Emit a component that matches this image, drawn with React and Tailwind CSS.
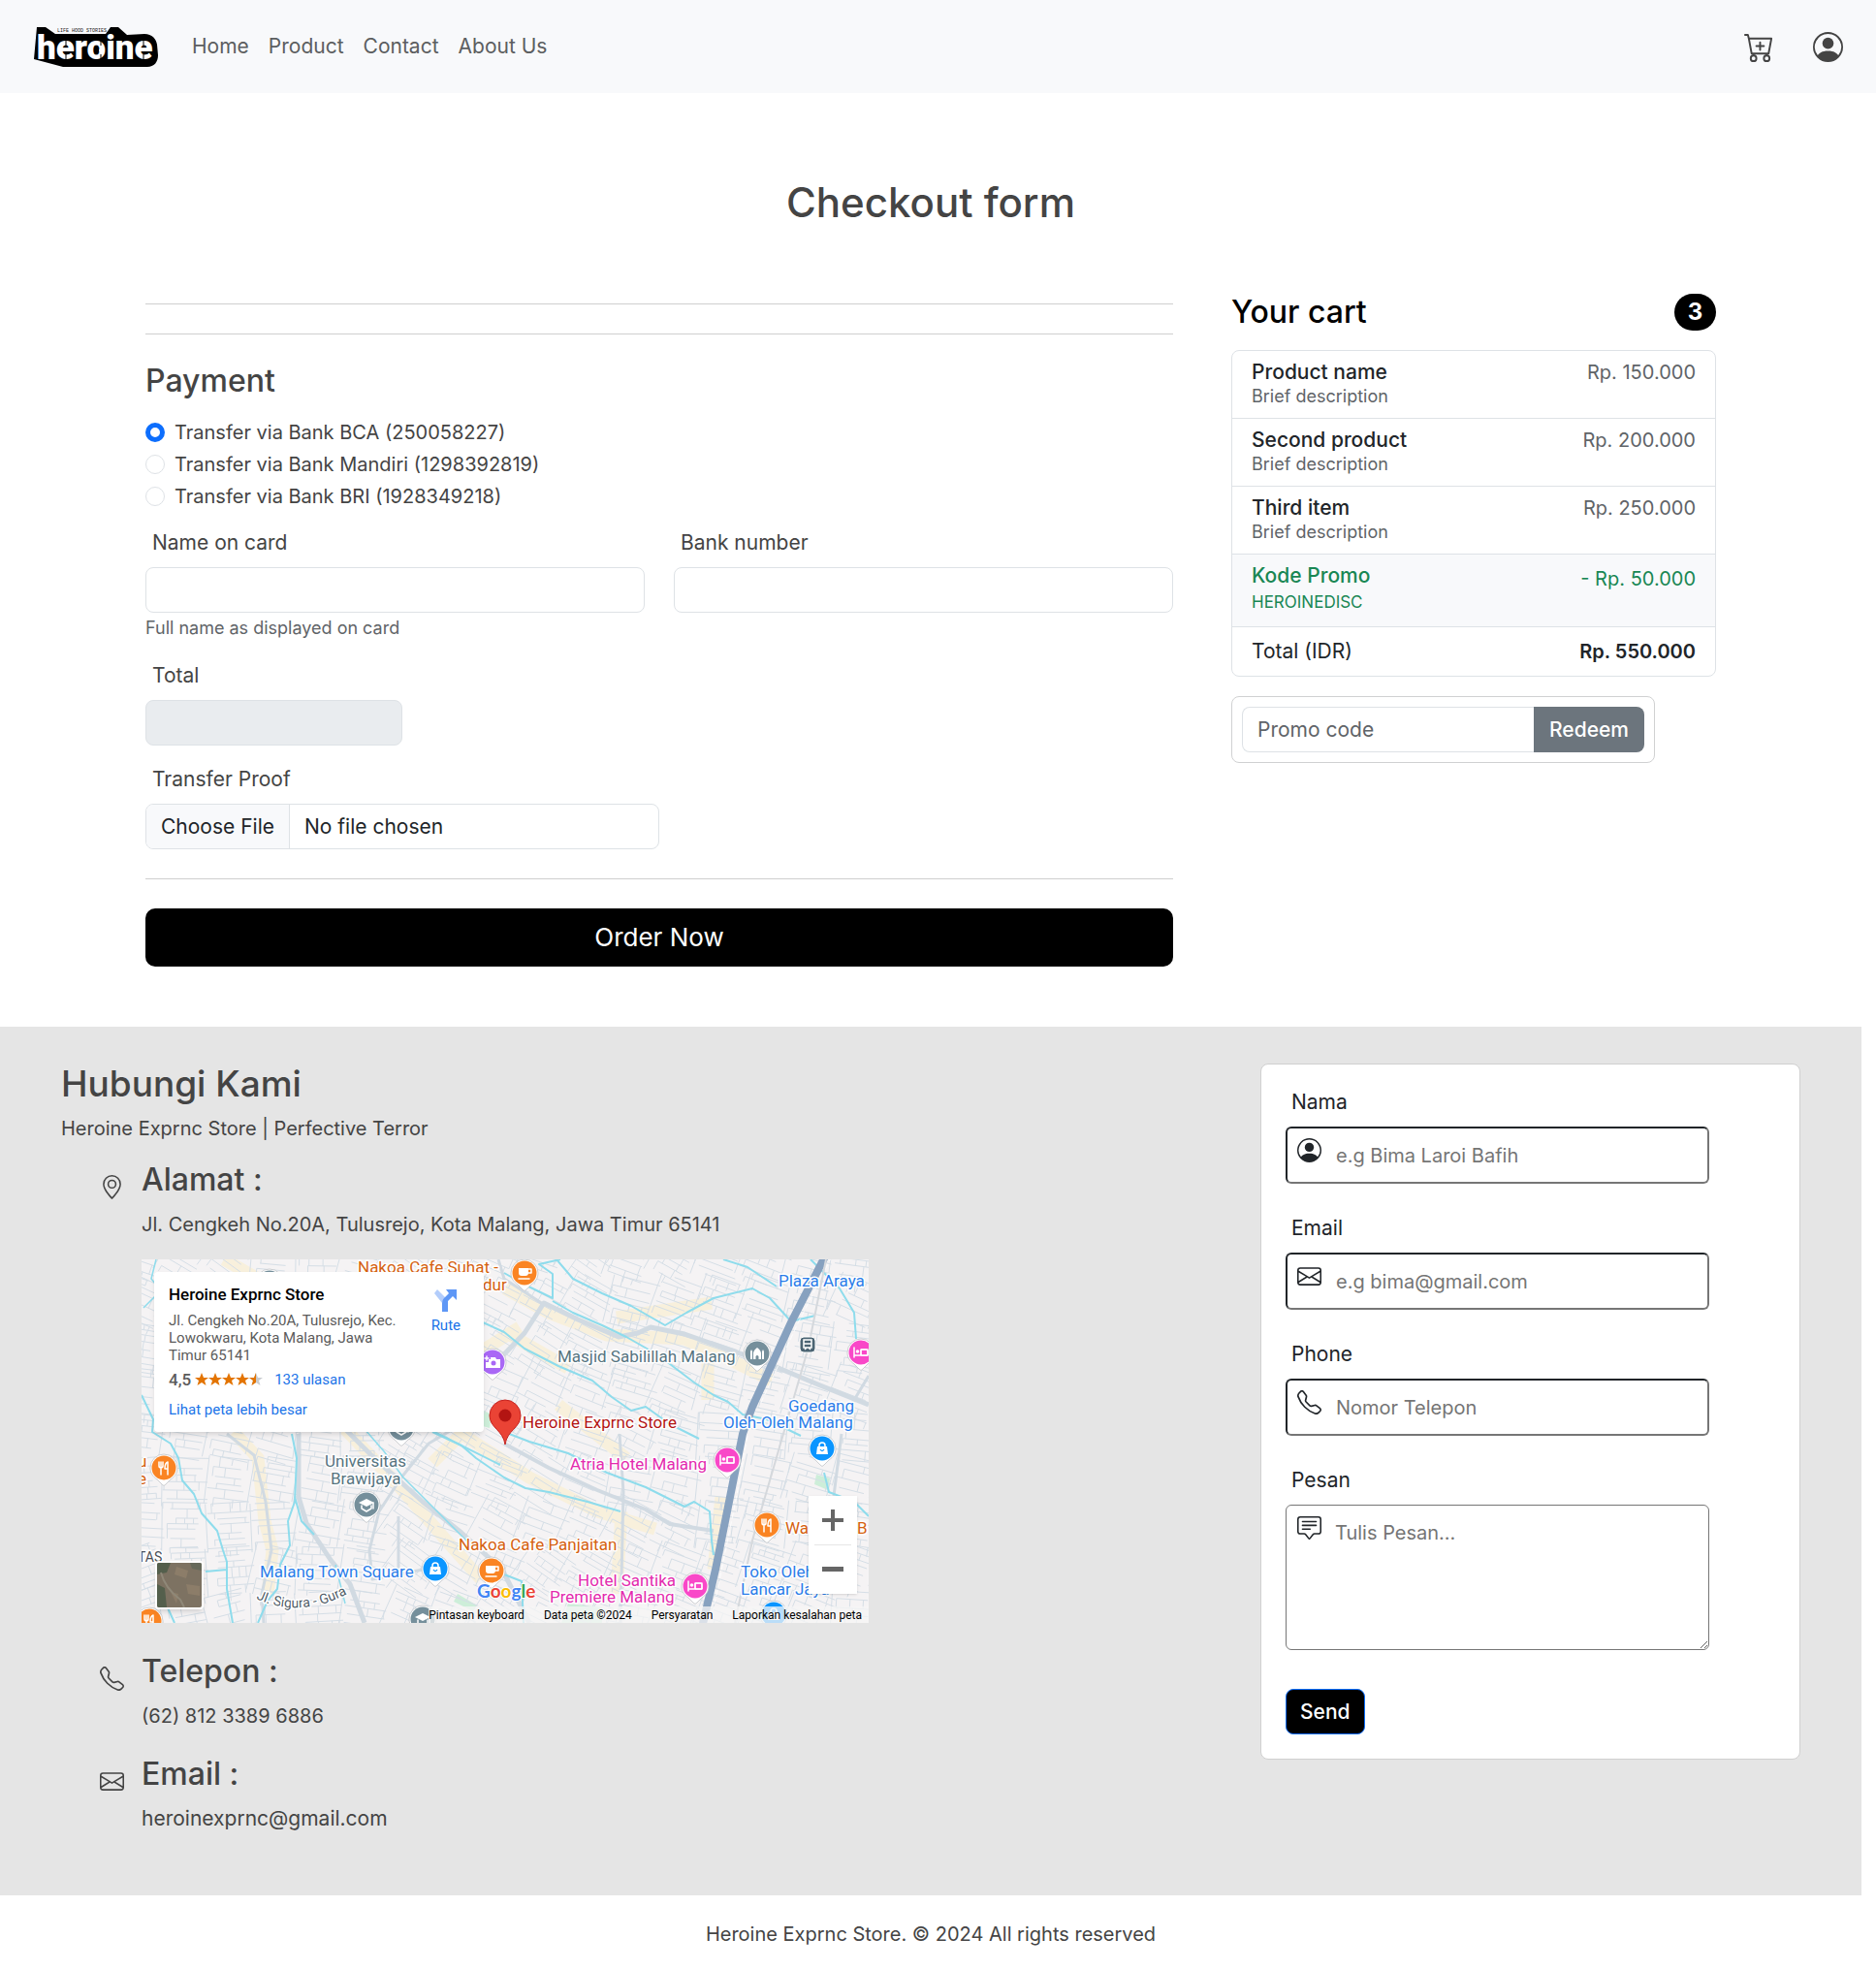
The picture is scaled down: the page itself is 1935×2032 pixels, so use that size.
import React from "react";
import { BsCartPlus, BsPersonCircle, BsGeoAlt, BsTelephone, BsEnvelope, BsChatSquareText } from "react-icons/bs";

const NAV = ["Home", "Product", "Contact", "About Us"];

const BANKS = [
  { id: "bca", label: "Transfer via Bank BCA (250058227)" },
  { id: "mandiri", label: "Transfer via Bank Mandiri (1298392819)" },
  { id: "bri", label: "Transfer via Bank BRI (1928349218)" },
];

const ITEMS = [
  { name: "Product name", price: "Rp. 150.000" },
  { name: "Second product", price: "Rp. 200.000" },
  { name: "Third item", price: "Rp. 250.000" },
];

const CONTACT_FIELDS = [
  { id: "nama", label: "Nama", type: "text", placeholder: "e.g Bima Laroi Bafih", Icon: BsPersonCircle },
  { id: "email", label: "Email", type: "email", placeholder: "e.g bima@gmail.com", Icon: BsEnvelope },
  { id: "phone", label: "Phone", type: "tel", placeholder: "Nomor Telepon", Icon: BsTelephone },
];

function Logo() {
  return (
    <svg width="130" height="46" viewBox="0 0 130 46" role="img" aria-label="heroine">
      <path d="M4 3h9l10 7h52l5-7h8l9 8 18-1c8 0 12 5 13 11l1 11c0 7-4 12-11 12H31L1 36z" fill="#000" />
      <text x="25" y="8" fontFamily="Liberation Mono, monospace" fontSize="5" fill="#222">LIFE HOOD STORIES</text>
      <text x="4" y="36" fontFamily="Roboto, sans-serif" fontWeight="900" fontSize="35" fill="#fff">heroine</text>
      <path d="M34 16v6M34 31v6M70 16v6M70 31v6M114 16v6M114 31v6" stroke="#000" strokeWidth="1" />
      <circle cx="70" cy="27" r="2" fill="#fff" />
    </svg>
  );
}

function Header() {
  return (
    <header className="flex h-24 items-center bg-[#f8f9fb] px-[34px]">
      <a href="#" className="mr-[34px] block">
        <Logo />
      </a>
      <nav className="flex flex-1 gap-5 text-[21px] text-[#5c5e60]">
        {NAV.map((item) => (
          <a key={item} href="#">{item}</a>
        ))}
      </nav>
      <div className="flex items-center gap-10 text-[31px] text-[#444]">
        <a href="#" aria-label="Cart"><BsCartPlus /></a>
        <a href="#" aria-label="Account"><BsPersonCircle /></a>
      </div>
    </header>
  );
}

function PaymentForm() {
  const label = "mb-[10px] block px-[7px] text-[21px] leading-[30px]";
  const input = "block h-[47px] w-full rounded-lg border border-[#dee2e6] bg-white px-4 text-[#212529]";
  return (
    <form>
      <hr className="mt-[10px] border-[#cfcfcf]" />
      <hr className="mt-[30px] border-[#cfcfcf]" />
      <h4 className="mt-[30px] mb-5 text-[32px] leading-9 font-medium">Payment</h4>
      <div className="mb-[18px]">
        {BANKS.map((bank, i) => (
          <div key={bank.id} className="mb-[3px] flex items-center">
            <input
              id={bank.id}
              type="radio"
              name="bank"
              defaultChecked={i === 0}
              className="h-5 w-5 appearance-none rounded-full border border-[#dee2e6] bg-white checked:border-[5px] checked:border-[#0d6efd]"
            />
            <label htmlFor={bank.id} className="pl-[10px] leading-[30px]">{bank.label}</label>
          </div>
        ))}
      </div>
      <div className="grid grid-cols-2 gap-[30px]">
        <div>
          <label htmlFor="card-name" className={label}>Name on card</label>
          <input id="card-name" className={input} />
          <small className="block text-lg leading-8 text-[#5f6468]">Full name as displayed on card</small>
        </div>
        <div>
          <label htmlFor="bank-number" className={label}>Bank number</label>
          <input id="bank-number" className={input} />
        </div>
      </div>
      <div className="mt-[18px] w-1/4">
        <label htmlFor="total" className={label}>Total</label>
        <input id="total" disabled className="block h-[47px] w-full rounded-lg border border-[#dee2e6] bg-[#e9ecef]" />
      </div>
      <div className="mt-5 w-1/2">
        <label htmlFor="proof" className={label}>Transfer Proof</label>
        <input
          id="proof"
          type="file"
          className="block h-[47px] w-full overflow-hidden rounded-lg border border-[#dee2e6] bg-white text-[21px] leading-[45px] text-[#212529] file:mr-[15px] file:h-[45px] file:border-r file:border-[#dee2e6] file:bg-[#f8f9fb] file:px-[15px] file:text-[#212529]"
        />
      </div>
      <hr className="my-[30px] border-[#cfcfcf]" />
      <button type="button" className="block h-[60px] w-full rounded-[10px] bg-black text-[26px] text-white">Order Now</button>
    </form>
  );
}

function Cart() {
  return (
    <aside>
      <h4 className="mb-5 flex h-[38px] items-center justify-between text-[32px] font-medium text-black">
        Your cart
        <span className="flex h-[38px] w-[43px] items-center justify-center rounded-full bg-black text-2xl font-bold text-white">3</span>
      </h4>
      <ul className="mb-5 divide-y divide-[#dee2e6] overflow-hidden rounded-lg border border-[#dee2e6] text-[#212529]">
        {ITEMS.map((item) => (
          <li key={item.name} className="flex justify-between px-5 pt-[10px] pb-[9px]">
            <div>
              <h6 className="text-[21px] leading-6 font-medium">{item.name}</h6>
              <small className="block text-lg leading-[26px] text-[#5f6468]">Brief description</small>
            </div>
            <span className="leading-6 text-[#5f6468]">{item.price}</span>
          </li>
        ))}
        <li className="flex justify-between bg-[#f8f9fb] px-5 py-[10px] text-[#198754]">
          <div>
            <h6 className="text-[21px] leading-6 font-medium">Kode Promo</h6>
            <small className="block text-[17px] leading-[30px]">HEROINEDISC</small>
          </div>
          <span className="leading-[30px]">- Rp. 50.000</span>
        </li>
        <li className="flex justify-between px-5 py-[10px] leading-[30px]">
          <span className="text-[21px]">Total (IDR)</span>
          <strong className="font-semibold">Rp. 550.000</strong>
        </li>
      </ul>
      <form className="flex w-[437px] max-w-full rounded-lg border border-[#d0d1d2] p-[10px]">
        <input aria-label="Promo code" placeholder="Promo code" className="h-[47px] min-w-0 flex-1 rounded-l-lg border border-r-0 border-[#dee2e6] px-[15px] text-[21px] placeholder:text-[#5f6468]" />
        <button type="button" className="h-[47px] rounded-r-lg bg-[#6c757d] px-4 text-[21px] font-medium text-white">Redeem</button>
      </form>
    </aside>
  );
}

/* ---------- Map ---------- */

function buildStreets() {
  let seed = 17;
  const rnd = () => {
    seed = (seed * 16807) % 2147483647;
    return seed / 2147483647;
  };
  let d = "";
  const cell = 46;
  for (let cx = 0; cx < 790; cx += cell) {
    for (let cy = 0; cy < 420; cy += cell) {
      const base = cx < 130 ? 30 - cy / 8 : cx < 260 ? 6 : cx < 480 ? 26 : cx < 560 ? 20 : 14;
      const a = ((base + (rnd() - 0.5) * 22) * Math.PI) / 180;
      const c = Math.cos(a);
      const s = Math.sin(a);
      const put = (x1, y1, x2, y2) => {
        const p = (x, y) => `${(cx + x * c - y * s).toFixed(1)} ${(cy + x * s + y * c).toFixed(1)}`;
        d += `M${p(x1, y1)}L${p(x2, y2)}`;
      };
      const h = 25;
      let y = -h;
      while (y < h) {
        const step = 5 + rnd() * 6;
        const from = -h + rnd() * 16;
        const to = h - rnd() * 16;
        put(from, y, to, y);
        let x = from;
        while (x < to) {
          if (rnd() < 0.5) put(x, y, x, y + step);
          x += 7 + rnd() * 14;
        }
        y += step;
      }
      put(-h, -h, -h, h);
    }
  }
  return d;
}

const STREETS = buildStreets();

function Glyph({ kind }) {
  const s = { fill: "none", stroke: "#fff", strokeWidth: 1.5, strokeLinecap: "round", strokeLinejoin: "round" };
  if (kind === "food")
    return (
      <g {...s}>
        <path d="M-5-6v4q0 2 2 2t2-2v-4M-3-6V7M4 7V-6Q1-5 1 1H4" />
      </g>
    );
  if (kind === "cafe")
    return (
      <g>
        <path d="M-6-5H4V0Q4 3 1 3H-3Q-6 3-6 0z" fill="#fff" />
        <path d="M4-4H7V0H4M-6 6H5" {...s} />
      </g>
    );
  if (kind === "hotel")
    return (
      <g>
        <path d="M-7-5V5M-7 3H7V-3H0V3" {...s} />
        <path d="M0-3H5Q7-3 7-1V3H0z" fill="none" stroke="#fff" />
        <circle cx="-3.500" cy="-1" r="1.800" fill="#fff" />
      </g>
    );
  if (kind === "shop")
    return (
      <g>
        <path d="M-5-2H5L6 6H-6z" fill="#fff" />
        <path d="M-3-2V-3Q-3-6 0-6T3-3V-2" {...s} />
        <path d="M-2 1Q0 4 2 1" fill="none" stroke="#0a95ff" strokeWidth="1.300" />
      </g>
    );
  if (kind === "school")
    return (
      <g>
        <path d="M-8-2L0-6L8-2L0 2z" fill="#fff" />
        <path d="M-5 1V4L0 7L5 4V1M7-2V4" {...s} />
      </g>
    );
  if (kind === "mosque")
    return <path d="M-7 6V-2L-6-4L-5-2V6zM5 6V-2L6-4L7-2V6zM-4 6V0Q-4-3 0-6Q4-3 4 0V6H1.500V3Q0 1-1.500 3V6z" fill="#fff" />;
  if (kind === "camera")
    return (
      <g>
        <path d="M-2-5H3L4-3H8V6H-7V0H-4V-3H-2z" fill="#fff" />
        <circle cx="1" cy="1" r="2.500" fill="#a968f5" />
        <path d="M-6-6V-2M-8-4H-4" {...s} />
      </g>
    );
  return null;
}

function Pin({ x, y, color, kind }) {
  return (
    <g transform={`translate(${x} ${y})`}>
      <path d="M-14 0a14 14 0 1 1 28 0c0 6-3 9-7 12L2 17Q0 20-2 17L-7 12C-11 9-14 6-14 0z" fill="#fff" stroke="#b9bcc0" strokeWidth=".7" />
      <circle r="12.500" fill={color} />
      <Glyph kind={kind} />
    </g>
  );
}

const PINS = [
  { x: 395, y: 14, color: "#fa8423", kind: "cafe" },
  { x: 132, y: 24, color: "#758f9b", kind: "school" },
  { x: 268, y: 174, color: "#758f9b", kind: "school" },
  { x: 362, y: 106, color: "#a968f5", kind: "camera" },
  { x: 635, y: 97, color: "#758f9b", kind: "mosque" },
  { x: 742, y: 96, color: "#f948c8", kind: "hotel" },
  { x: 604, y: 207, color: "#f948c8", kind: "hotel" },
  { x: 702, y: 195, color: "#0a95ff", kind: "shop" },
  { x: 23, y: 215, color: "#fa8423", kind: "food" },
  { x: 232, y: 253, color: "#758f9b", kind: "school" },
  { x: 645, y: 274, color: "#fa8423", kind: "food" },
  { x: 303, y: 319, color: "#0a95ff", kind: "shop" },
  { x: 361, y: 321, color: "#fa8423", kind: "cafe" },
  { x: 571, y: 337, color: "#f948c8", kind: "hotel" },
  { x: 8, y: 373, color: "#fa8423", kind: "food" },
  { x: 290, y: 371, color: "#758f9b", kind: "school" },
  { x: 652, y: 366, color: "#0a95ff", kind: "shop" },
];

const ORANGE = "#d5610f";
const BLUE = "#2b7de9";
const SLATE = "#56747f";
const PINK = "#e32bae";

const MAP_LABELS = [
  { x: 223, y: 14, text: "Nakoa Cafe Suhat -", color: ORANGE },
  { x: 352, y: 32, text: "dur", color: ORANGE },
  { x: 657, y: 28, text: "Plaza Araya", color: BLUE },
  { x: 429, y: 106, text: "Masjid Sabilillah Malang", color: SLATE },
  { x: 667, y: 157, text: "Goedang", color: BLUE },
  { x: 600, y: 174, text: "Oleh-Oleh Malang", color: BLUE },
  { x: 393, y: 174, text: "Heroine Exprnc Store", color: "#b31412" },
  { x: 442, y: 217, text: "Atria Hotel Malang", color: PINK },
  { x: 189, y: 214, text: "Universitas", color: SLATE },
  { x: 195, y: 232, text: "Brawijaya", color: SLATE },
  { x: 327, y: 300, text: "Nakoa Cafe Panjaitan", color: ORANGE },
  { x: 122, y: 328, text: "Malang Town Square", color: BLUE },
  { x: 450, y: 337, text: "Hotel Santika", color: PINK },
  { x: 421, y: 354, text: "Premiere Malang", color: PINK },
  { x: 618, y: 328, text: "Toko Oleh", color: BLUE },
  { x: 618, y: 346, text: "Lancar Jaya", color: BLUE },
  { x: 664, y: 283, text: "Wa", color: ORANGE },
  { x: 738, y: 283, text: "B", color: ORANGE },
  { x: -4, y: 214, text: "u", color: ORANGE },
  { x: -4, y: 232, text: "e", color: ORANGE },
];

function MapDrawing() {
  return (
    <svg viewBox="0 0 750 375" className="block h-full w-full" fontFamily="Roboto, sans-serif" role="img" aria-label="Map">
      <rect width="750" height="375" fill="#f5f3f4" />
      <g fill="none" stroke="#f8f0dc" strokeLinecap="butt" strokeWidth="13">
        <path d="M95 178L120 205L127 270L135 300L130 345" />
        <path d="M210 175L262 230L310 285L350 330" />
        <path d="M375 30L420 55L480 78L560 82L600 100L650 125" />
        <path d="M375 75L440 112" />
        <path d="M300 210L330 180L400 225L470 260L530 278" />
        <path d="M490 60L588 45M584 85L584 145M430 150L500 205M495 260L490 345M598 245L590 320M350 95L390 70M85 0L120 20L330 60" />
      </g>
      <path d="M696 222l14 4-2 12-14-6zM440 355l35 4v16h-42zM326 345l20 12-4 6-20-10zM345 152l16 8-2 14-14-4z" fill="#cdeed9" />
      <path d={STREETS} fill="none" stroke="#d5dee6" strokeWidth="1" />
      <g fill="none" stroke="#d1dae2" strokeWidth="5" strokeLinejoin="round">
        <path d="M88 180L116 202L128 250L134 300L124 345L126 375" strokeWidth="3" />
        <path d="M162 180L162 245L170 272L195 310L215 335L230 375" />
        <path d="M205 170L240 205L290 250L330 282L372 320L400 375" />
        <path d="M372 100L395 76L415 45L450 62L492 80L512 76L525 70L560 77L640 105L700 130L750 150" />
        <path d="M374 190L420 215L470 238L520 258L545 273L590 280" strokeWidth="4" />
        <path d="M330 170L296 190L268 225L245 260L235 300L238 330L290 320M265 265L265 330" strokeWidth="3" />
        <path d="M414 46L374 20L368 0M493 180L497 240L494 375M722 180L712 260M750 120L732 150" strokeWidth="3" />
      </g>
      <g fill="none" stroke="#8edcec" strokeWidth="2" strokeLinejoin="round">
        <path d="M0 140L12 165L11 178L30 190L38 205L42 228L54 242L62 262L78 280L84 300L88 312L88 340L94 375M66 322L88 320M25 355L34 375" />
        <path d="M155 180L160 205L158 250L151 270L153 295L143 315L140 340L130 352L120 375M158 245L165 270L178 284" />
        <path d="M200 315L210 355M2 50L20 32L10 20L15 0M230 175L250 198L270 225L305 260L340 295" strokeWidth="1.500" />
        <path d="M300 178L330 192L345 205L374 225L396 236L420 240L460 250L494 260" />
        <path d="M302 178L370 212M374 178L400 188L440 200L480 220L520 235L560 255L570 250L586 260L588 290L590 305" />
        <path d="M352 65L374 75L395 92L430 110L465 125L485 142L505 156L520 152L545 170L575 185" />
        <path d="M374 14L395 26L424 40L424 15L410 5L432 0M424 43L445 55L475 68L500 80L530 97L545 108L570 127L590 140L605 147L620 160L645 165L680 182" />
        <path d="M428 0L445 20L475 35L505 48L540 68L562 55L590 40L630 30L648 40L670 64L695 58" />
        <path d="M600 0L625 8L640 18L655 28M690 0L720 30L735 55L737 82M704 220L709 240L735 250L750 265M374 325L392 332L394 375" />
      </g>
      <path d="M706-5L670 65L630 152L620 180L606 250L592 320L578 380" fill="none" stroke="#87a1bf" strokeWidth="8" />
      <path d="M712-3L676 68L637 152M625 182L613 248L598 322L586 378" fill="none" stroke="#fff" strokeDasharray="6 3" strokeWidth=".8" />
      <path d="M706 0L688 90L662 180L630 290L612 375" fill="none" stroke="#d5d8dc" strokeWidth="2" />
      {PINS.map((p) => (
        <Pin key={`${p.x}-${p.y}`} {...p} />
      ))}
      <g transform="translate(687 88)">
        <rect x="-8" y="-8" width="16" height="16" rx="4" fill="#4b6473" stroke="#fff" />
        <path d="M-4-5H4V3H-4zM-4-1H4M-3 5L-1 3M3 5L1 3" fill="none" stroke="#fff" strokeWidth="1.500" />
      </g>
      <g fontSize="17" stroke="#fff" strokeWidth="3" paintOrder="stroke" strokeLinejoin="round">
        {MAP_LABELS.map((l) => (
          <text key={`${l.text}-${l.x}`} x={l.x} y={l.y} fill={l.color}>{l.text}</text>
        ))}
        <text x="-4" y="312" fontSize="14" fill="#4a4f57">TAS</text>
        <path id="sigura" d="M118 350Q165 372 218 342" fill="none" stroke="none" />
        <text fontSize="14" fill="#4f5b66"><textPath href="#sigura">Jl. Sigura - Gura</textPath></text>
      </g>
      <path d="M375 191C373 176 359 174 359 161a16 16 0 0 1 32 0C391 174 377 176 375 191z" fill="#ea4335" stroke="#c5221f" />
      <circle cx="375" cy="161" r="6.500" fill="#b31412" />
      <text x="346" y="349" fontSize="19" fontFamily="Lato, sans-serif" fontWeight="700" stroke="#fff" strokeWidth="2" paintOrder="stroke">
        <tspan fill="#4285f4">G</tspan><tspan fill="#ea4335">o</tspan><tspan fill="#fbbc04">o</tspan><tspan fill="#4285f4">g</tspan><tspan fill="#34a853">l</tspan><tspan fill="#ea4335">e</tspan>
      </text>
    </svg>
  );
}

function Stars() {
  const star = "M7 0L9 5L14 5L10 8L11.500 13L7 10L2.500 13L4 8L0 5L5 5z";
  return (
    <svg width="70" height="14" viewBox="0 0 70 14" aria-label="4.5 stars">
      {[0, 1, 2, 3].map((i) => (
        <path key={i} d={star} transform={`translate(${i * 14} 0)`} fill="#e37400" />
      ))}
      <path d={star} transform="translate(56 0)" fill="#c9ccd0" />
      <path d="M7 0L5 5H0L4 8L2.500 13L7 10z" transform="translate(56 0)" fill="#e37400" />
    </svg>
  );
}

function StoreMap() {
  return (
    <div className="relative h-[375px] w-[750px] max-w-full overflow-hidden font-[Roboto,sans-serif]">
      <MapDrawing />
      <div className="absolute top-[13px] left-[13px] flex h-[165px] w-[340px] justify-between rounded-sm bg-white px-[15px] pt-3 shadow-md">
        <div>
          <p className="mb-[7px] text-[17px] leading-[22px] font-medium text-black">Heroine Exprnc Store</p>
          <p className="text-[15px] leading-[18px] text-[#5b5b5b]">
            Jl. Cengkeh No.20A, Tulusrejo, Kec.<br />Lowokwaru, Kota Malang, Jawa<br />Timur 65141
          </p>
          <div className="mt-[6px] flex items-center leading-5">
            <span className="mr-1 text-[17px] font-medium text-[#5b5b5b]">4,5</span>
            <Stars />
            <a href="#" className="ml-3 text-[15px] text-[#1a73e8]">133 ulasan</a>
          </div>
          <a href="#" className="mt-[11px] block text-[15px] leading-5 text-[#1a73e8]">Lihat peta lebih besar</a>
        </div>
        <a href="#" className="mr-[9px] flex flex-col items-center pt-[5px] text-[15px] text-[#1a73e8]">
          <svg width="24" height="24" viewBox="0 0 24 24" className="mb-1">
            <path d="M3 1L12 10L8 15L0 5z" fill="#b3cdfb" />
            <path d="M8 24V15Q8 12 10 10L15 5L12 1H23V12L19 8L14 13V24z" fill="#5e97f6" />
          </svg>
          Rute
        </a>
      </div>
      <div className="absolute right-3 bottom-[30px] flex h-[101px] w-[50px] flex-col bg-white text-[#666] shadow">
        <button type="button" aria-label="Zoom in" className="flex flex-1 items-center justify-center">
          <svg width="22" height="22" viewBox="0 0 22 22" fill="#666"><path d="M9 0h4v9h9v4h-9v9H9v-9H0V9h9z" /></svg>
        </button>
        <hr className="mx-[6px] border-[#e6e6e6]" />
        <button type="button" aria-label="Zoom out" className="flex flex-1 items-center justify-center">
          <svg width="22" height="6" viewBox="0 0 22 6" fill="#666"><path d="M0 0h22v5H0z" /></svg>
        </button>
      </div>
      <button type="button" aria-label="Satellite" className="absolute bottom-[14px] left-[14px] h-[50px] w-[50px] overflow-hidden rounded-sm border-2 border-white shadow-md">
        <svg width="46" height="46" viewBox="0 0 46 46">
          <rect width="46" height="46" fill="#7d7262" />
          <path d="M0 0h14l-4 10-10 2zM0 22l8 4 2 20H0z" fill="#545f4c" />
          <path d="M20 4l12 4-2 8-12-4zM30 22l14 2v10l-12-2zM14 30l8 2-2 10z" fill="#8c7d69" />
          <path d="M4 10Q8 26 24 38L28 46" fill="none" stroke="#8f8878" strokeWidth="2" />
          <path d="M34 0h12v8l-10-2z" fill="#66695a" />
        </svg>
      </button>
      <div className="absolute right-0 bottom-0 flex h-[17px] items-center gap-5 bg-[#f5f5f5]/75 pr-[7px] text-xs text-black">
        <button type="button">Pintasan keyboard</button>
        <span>Data peta ©2024</span>
        <a href="#">Persyaratan</a>
        <a href="#">Laporkan kesalahan peta</a>
      </div>
    </div>
  );
}

function InfoRow({ Icon, title, children }) {
  return (
    <div className="flex pl-10">
      <Icon className="mt-[13px] mr-[18px] shrink-0 text-[25px]" />
      <div className="min-w-0">
        <h4 className="mb-[13px] text-[32px] leading-9 font-medium">{title}</h4>
        {children}
      </div>
    </div>
  );
}

function ContactForm() {
  const icon = "pointer-events-none absolute top-3 left-3 text-[25px] text-[#212529]";
  const label = "mb-[10px] block px-[6px] text-[21px] leading-[30px]";
  return (
    <form className="w-[557px] max-w-full rounded-lg border border-[#d0d0d0] bg-white p-[25px] pt-6 text-[#212529]">
      {CONTACT_FIELDS.map(({ id, label: text, type, placeholder, Icon }) => (
        <div key={id} className="mb-[31px]">
          <label htmlFor={id} className={label}>{text}</label>
          <div className="relative w-[437px] max-w-full">
            <Icon className={icon} />
            <input
              id={id}
              type={type}
              placeholder={placeholder}
              className="block h-[59px] w-full rounded-md border-2 border-t-[#212529] border-r-[#767676] border-b-[#767676] border-l-[#212529] bg-white pl-[50px] placeholder:text-[#757575]"
            />
          </div>
        </div>
      ))}
      <label htmlFor="pesan" className={label}>Pesan</label>
      <div className="relative mb-10 w-[437px] max-w-full">
        <BsChatSquareText className={icon} />
        <textarea
          id="pesan"
          placeholder="Tulis Pesan..."
          className="block h-[150px] w-full rounded-md border border-[#767676] bg-white pt-[13px] pl-[50px] leading-[30px] placeholder:text-[#757575]"
        />
      </div>
      <button type="button" className="h-[47px] rounded-lg border border-[#0d6efd] bg-black px-[14px] text-[21px] font-medium text-white">Send</button>
    </form>
  );
}

export default function App() {
  return (
    <div className="bg-white font-[Inter,sans-serif] text-xl text-[#444]">
      <Header />
      <div className="pr-[15px]">
        <main className="mx-auto max-w-[1650px] px-[15px] pb-[62px]">
          <h2 className="pt-[89px] text-center text-[42px] leading-[48px] font-medium">Checkout form</h2>
          <div className="mt-[70px] grid grid-cols-[1060fr_500fr] gap-[60px]">
            <PaymentForm />
            <Cart />
          </div>
        </main>
        <section className="flex justify-between bg-[#e5e5e5] pt-[38px] pr-[63px] pb-[64px] pl-[63px]">
          <div>
            <h3 className="text-[37px] leading-[42px] font-medium">Hubungi Kami</h3>
            <p className="mt-[10px] mb-5 leading-[30px]">Heroine Exprnc Store | Perfective Terror</p>
            <InfoRow Icon={BsGeoAlt} title="Alamat :">
              <p className="mb-[21px] leading-[30px]">Jl. Cengkeh No.20A, Tulusrejo, Kota Malang, Jawa Timur 65141</p>
              <StoreMap />
            </InfoRow>
            <div className="mt-8">
              <InfoRow Icon={BsTelephone} title="Telepon :">
                <p className="leading-[30px]">(62) 812 3389 6886</p>
              </InfoRow>
            </div>
            <div className="mt-[27px]">
              <InfoRow Icon={BsEnvelope} title="Email :">
                <p className="text-[21px] leading-[30px]">heroinexprnc@gmail.com</p>
              </InfoRow>
            </div>
          </div>
          <div>
            <ContactForm />
          </div>
        </section>
        <footer className="py-[25px] text-center leading-[30px]">Heroine Exprnc Store. © 2024 All rights reserved</footer>
      </div>
    </div>
  );
}
